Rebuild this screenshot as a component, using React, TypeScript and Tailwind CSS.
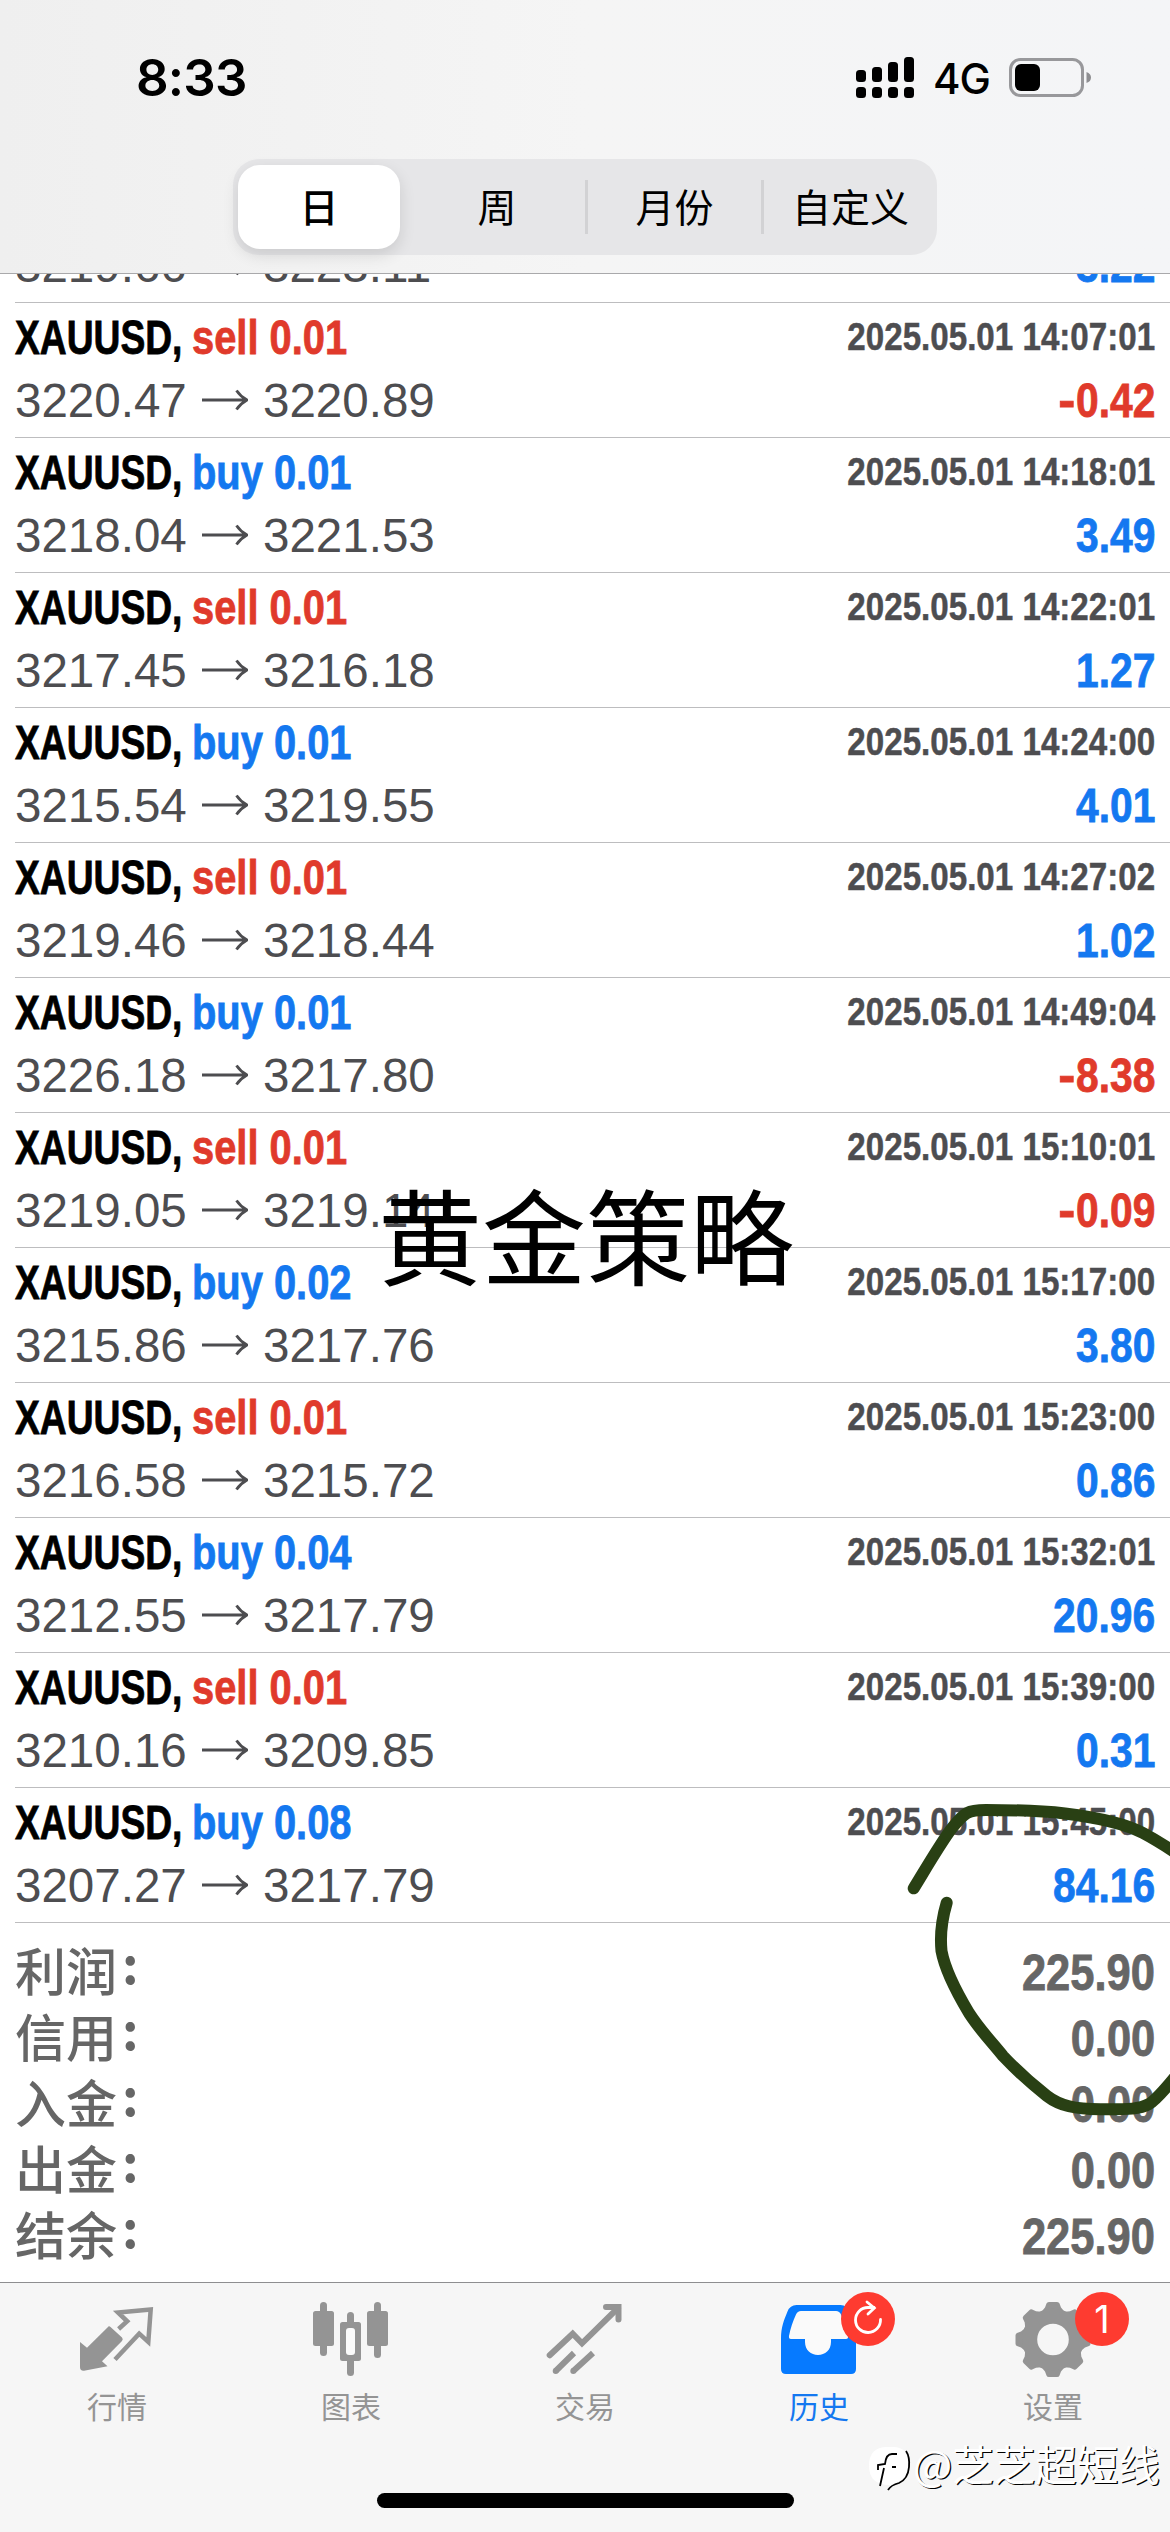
import React from "react";

type Trade = {
  order?: { side: "buy" | "sell"; lots: string; time: string };
  open: string;
  close: string;
  profit: string;
};

const trades: Trade[] = [
  { open: "3219.66", close: "3223.11", profit: "3.22" },
  { order: { side: "sell", lots: "0.01", time: "2025.05.01 14:07:01" }, open: "3220.47", close: "3220.89", profit: "-0.42" },
  { order: { side: "buy", lots: "0.01", time: "2025.05.01 14:18:01" }, open: "3218.04", close: "3221.53", profit: "3.49" },
  { order: { side: "sell", lots: "0.01", time: "2025.05.01 14:22:01" }, open: "3217.45", close: "3216.18", profit: "1.27" },
  { order: { side: "buy", lots: "0.01", time: "2025.05.01 14:24:00" }, open: "3215.54", close: "3219.55", profit: "4.01" },
  { order: { side: "sell", lots: "0.01", time: "2025.05.01 14:27:02" }, open: "3219.46", close: "3218.44", profit: "1.02" },
  { order: { side: "buy", lots: "0.01", time: "2025.05.01 14:49:04" }, open: "3226.18", close: "3217.80", profit: "-8.38" },
  { order: { side: "sell", lots: "0.01", time: "2025.05.01 15:10:01" }, open: "3219.05", close: "3219.14", profit: "-0.09" },
  { order: { side: "buy", lots: "0.02", time: "2025.05.01 15:17:00" }, open: "3215.86", close: "3217.76", profit: "3.80" },
  { order: { side: "sell", lots: "0.01", time: "2025.05.01 15:23:00" }, open: "3216.58", close: "3215.72", profit: "0.86" },
  { order: { side: "buy", lots: "0.04", time: "2025.05.01 15:32:01" }, open: "3212.55", close: "3217.79", profit: "20.96" },
  { order: { side: "sell", lots: "0.01", time: "2025.05.01 15:39:00" }, open: "3210.16", close: "3209.85", profit: "0.31" },
  { order: { side: "buy", lots: "0.08", time: "2025.05.01 15:45:00" }, open: "3207.27", close: "3217.79", profit: "84.16" },
];

const summary = [
  { label: "利润", value: "225.90" },
  { label: "信用", value: "0.00" },
  { label: "入金", value: "0.00" },
  { label: "出金", value: "0.00" },
  { label: "结余", value: "225.90" },
];

function StatusBar() {
  return (
    <div className="flex h-[159px] items-start justify-between pr-[77px] pl-[136px]">
      <div className="mt-[53px] font-['Inter'] text-[51px] leading-[50px] font-semibold tracking-[-0.8px] text-black">8:33</div>
      <div className="mt-[54px] flex items-start">
        <svg className="mt-[3px] h-[42px] w-[60px]" viewBox="0 0 60 42">
          <rect x="0" y="13" width="10" height="12" rx="3.5" />
          <rect x="16" y="10" width="10" height="15" rx="3.5" />
          <rect x="32" y="5" width="10" height="20" rx="3.5" />
          <rect x="48" y="0" width="10" height="25" rx="3.5" />
          <rect x="0" y="30" width="10" height="11" rx="3.5" />
          <rect x="16" y="30" width="10" height="11" rx="3.5" />
          <rect x="32" y="30" width="10" height="11" rx="3.5" />
          <rect x="48" y="30" width="10" height="11" rx="3.5" />
        </svg>
        <div className="mt-[4px] ml-[17px] w-[58px] font-['Inter'] text-[42px] leading-[42px] font-medium tracking-[-1px] text-black">4G</div>
        <svg className="mt-[4px] ml-[18px] h-[40px] w-[84px]" viewBox="0 0 84 40">
          <rect x="1.5" y="1.5" width="72" height="36" rx="10" fill="none" stroke="#98989b" strokeWidth="3" />
          <rect x="6" y="6" width="25" height="27" rx="6" />
          <path d="M77.500 14 q4.500 1.500 4.500 5.500 t-4.500 5.500Z" fill="#8e8e91" />
        </svg>
      </div>
    </div>
  );
}

function Segments() {
  return (
    <div className="mx-auto flex h-[96px] w-[704px] items-center rounded-[26px] bg-[#e6e6e8] px-[5px] font-['Noto_Sans_CJK_SC',sans-serif] text-[39px] leading-none text-black">
      <div className="flex h-[84px] w-[162px] items-center justify-center rounded-[22px] bg-white pb-[3px] font-medium shadow-[0_6px_16px_rgba(0,0,0,0.12)]">日</div>
      <div className="ml-[9px] flex h-[54px] w-[176px] items-center justify-center pb-[3px]">周</div>
      <div className="flex h-[54px] w-[179px] items-center justify-center border-x-[3px] border-[#d2d2d4] pb-[3px]">月份</div>
      <div className="flex h-[54px] flex-1 items-center justify-center pb-[3px] pl-[5px]">自定义</div>
    </div>
  );
}

function TradeRow({ t }: { t: Trade }) {
  const tone = t.order?.side === "sell" ? "text-[#e03a2b]" : "text-[#1478f0]";
  const negative = t.profit.startsWith("-");
  return (
    <div className="ml-[15px] flex h-[135px] shrink-0 justify-between border-b border-[#bdbdbf] pt-[11px] pr-[15px]">
      <div className="flex flex-col gap-[15px] whitespace-nowrap">
        <div className="flex h-[48px] text-[48px] leading-none font-bold [-webkit-text-stroke:0.8px_currentColor]">
          {t.order && (
            <>
              <div className="w-[177px]">
                <div className="w-max origin-left scale-x-[0.775] text-black">XAUUSD,</div>
              </div>
              <div className={tone}>
                <div className="w-max origin-left scale-x-[0.83]">
                  {t.order.side} {t.order.lots}
                </div>
              </div>
            </>
          )}
        </div>
        <div className="flex text-[48px] leading-none text-[#4d4d50]">
          <div className="w-[187px]">
            <div className="w-max origin-left scale-x-[0.99]">{t.open}</div>
          </div>
          <svg className="mt-[11px] h-[24px] w-[46px]" viewBox="0 0 46 24" fill="none" stroke="currentColor" strokeWidth="2.800">
            <path d="M0 12H44M34.500 2.500Q38.500 8.500 45 12Q38.500 15.500 34.500 21.500" />
          </svg>
          <div className="ml-[14.500px] w-max origin-left scale-x-[0.99]">{t.close}</div>
        </div>
      </div>
      <div className="flex flex-col items-end font-bold whitespace-nowrap">
        <div className="mt-[3px] mb-[21px] h-[39px] origin-right scale-x-[0.85] text-[39px] leading-none text-[#4d4d50] [-webkit-text-stroke:0.5px_currentColor]">{t.order?.time}</div>
        <div className={negative ? "text-[#e03a2b]" : "text-[#1478f0]"}>
          <div className="origin-right scale-x-[0.85] text-[48px] leading-none [-webkit-text-stroke:0.8px_currentColor]">
            {negative && <span className="mr-[1px] inline-block origin-right scale-x-[1.250]">-</span>}
            {t.profit.replace("-", "")}
          </div>
        </div>
      </div>
    </div>
  );
}

function Summary() {
  return (
    <div className="flex flex-1 flex-col pt-[16px] pr-[15px] pl-[15px] text-[#666666]">
      {summary.map((s) => (
        <div key={s.label} className="flex h-[66px] items-center justify-between">
          <div className="flex pb-[6px] font-['Noto_Sans_CJK_SC',sans-serif] text-[51px] leading-none font-medium">
            {s.label}
            <span className="ml-[5px] -translate-y-[7px] font-bold">:</span>
          </div>
          <div className="origin-right scale-x-[0.87] pt-[1px] text-[50px] leading-none font-bold [-webkit-text-stroke:0.8px_currentColor]">{s.value}</div>
        </div>
      ))}
    </div>
  );
}

function QuotesIcon() {
  return (
    <svg className="h-[88px] w-[100px]" viewBox="67 2296 100 88">
      <path d="M80 2342L87 2347.700L107.500 2327.500Q109 2325.500 110.500 2327L122 2337.500Q123.500 2339.300 122 2341L102 2361.300L107.500 2366.300L84 2370.700Q80 2371 80 2367Z" fill="#949494" />
      <path d="M118.600 2329L127.200 2321.300L118 2312.500L150.700 2309.500L148.300 2342L139.200 2333.700L115 2359.500" fill="none" stroke="#949494" strokeWidth="4.500" />
    </svg>
  );
}

function ChartIcon() {
  return (
    <svg className="h-[88px] w-[100px]" viewBox="301 2296 100 88" fill="#949494">
      <rect x="320" y="2302" width="7" height="54" rx="3.500" />
      <rect x="313" y="2311" width="21" height="35" rx="2.500" />
      <rect x="347" y="2312" width="7" height="64" rx="3.500" />
      <rect x="340" y="2322" width="21" height="39" rx="2.500" />
      <rect x="346" y="2328" width="9" height="27" rx="3" fill="#fafafa" />
      <rect x="374" y="2302" width="7" height="56" rx="3.500" />
      <rect x="367" y="2311" width="21" height="35" rx="2.500" />
    </svg>
  );
}

function TradeIcon() {
  return (
    <svg className="h-[88px] w-[100px]" viewBox="535 2296 100 88" fill="none" stroke="#949494" strokeWidth="6">
      <path d="M549.700 2355.300L572.700 2333.700L582 2343.300L618 2308" strokeLinecap="round" />
      <path d="M606 2307H618.500V2319.500" strokeLinecap="round" />
      <path d="M555.700 2371L574 2353M573.300 2371L593 2353" />
      <path d="M555.700 2371h0.010M573.300 2371h0.010" strokeLinecap="round" />
    </svg>
  );
}

function HistoryIcon() {
  return (
    <svg className="h-[88px] w-[100px]" viewBox="769 2296 100 88">
      <path d="M781 2369V2339C781 2327 784 2320 787.500 2311.500Q790 2305 796.500 2305H840.500Q847 2305 849.500 2311.500C853 2320 856 2327 856 2339V2369Q856 2374 851 2374H786Q781 2374 781 2369Z" fill="#067aff" />
      <path d="M791 2339Q788.500 2339 789 2336C790.500 2328 793 2321 796 2314.500Q797.500 2311 801 2311H836Q839.500 2311 841 2314.500C844 2321 846.500 2328 848 2336Q848.500 2339 846 2339H831V2342C831 2350 825 2355 818 2355S805 2350 805 2342V2339Z" fill="#fafafa" />
    </svg>
  );
}

function SettingsIcon() {
  return (
    <svg className="h-[88px] w-[100px]" viewBox="-50 -43.500 100 88">
      <g fill="#949494">
        {[0, 45, 90, 135, 180, 225, 270, 315].map((a) => (
          <path key={a} d="M-13 -26L-8 -32L-6.500 -36Q-6 -37.500 -4 -37.500H4Q6 -37.500 6.500 -36L8 -32L13 -26Z" transform={`rotate(${a})`} />
        ))}
      </g>
      <circle r="23.300" fill="none" stroke="#949494" strokeWidth="15" />
    </svg>
  );
}

function TabBar() {
  const tabs = [
    { label: "行情", icon: <QuotesIcon /> },
    { label: "图表", icon: <ChartIcon /> },
    { label: "交易", icon: <TradeIcon /> },
    { label: "历史", icon: <HistoryIcon />, active: true, badge: "sync" },
    { label: "设置", icon: <SettingsIcon />, badge: "1" },
  ];
  return (
    <nav className="grid h-[139px] grid-cols-5">
      {tabs.map((tab) => (
        <div key={tab.label} className="relative flex flex-col items-center pt-[13px]">
          {tab.icon}
          {tab.badge && (
            <div className="absolute top-[9px] left-[139px] flex size-[54px] items-center justify-center rounded-full bg-[#fe3b30] font-['Inter'] text-[38px] leading-none text-white">
              {tab.badge === "sync" ? (
                <svg className="size-[54px]" viewBox="841 2292 54 54" fill="none" stroke="white" strokeWidth="2.800" strokeLinecap="round">
                  <path d="M880.500 2319.500A12.500 12.500 0 1 1 868 2307.500H874" />
                  <path d="M867 2302L874.300 2308L868 2314" />
                </svg>
              ) : (
                tab.badge
              )}
            </div>
          )}
          <div className={`mt-[6px] font-['Noto_Sans_CJK_SC',sans-serif] text-[30px] leading-none ${tab.active ? "text-[#1478f0]" : "text-[#949494]"}`}>{tab.label}</div>
        </div>
      ))}
    </nav>
  );
}

function Watermark() {
  return (
    <div className="absolute top-[2439px] left-[867px] flex items-start">
      <svg className="h-[56px] w-[46px]" viewBox="0 0 46 56">
        <path d="M20 8h6q16 0 16 18q0 14-12 18l-9 8l2-6q-21 0-21-19T20 8Z" fill="white" />
        <path d="M39 12q4 6 3 16q-1 12-10 16q-8 2-11 7" fill="none" stroke="black" strokeWidth="1.800" />
        <path d="M13 47L17 29M11 31v-5l7-1q1-10 7-10h5M25 28h4" fill="none" stroke="black" strokeWidth="1.800" />
      </svg>
      <div className="-mt-[4px] font-['Noto_Sans_CJK_SC',sans-serif] text-[41.500px] leading-[56px] whitespace-nowrap text-white [text-shadow:1.200px_1.200px_0_#000]">@芝芝超短线</div>
    </div>
  );
}

function Scribble() {
  return (
    <svg className="pointer-events-none absolute top-[1790px] left-[890px] h-[340px] w-[280px]" viewBox="890 1790 280 340" fill="none" stroke="#294014" strokeWidth="12" strokeLinecap="round" strokeLinejoin="round">
      <path d="M913.700 1888.300C925 1870 940 1844 952 1828C965 1812 968 1810 986 1810C1010 1810 1040 1810.500 1065 1813.500C1085 1816 1122 1822 1143 1833Q1158 1841 1176 1853" />
      <path d="M946.700 1902.700C941 1922 940 1936 941.500 1951C945 1970 957 1993 969 2013C980 2030 990 2040 1003 2056C1020 2074 1033 2085 1047 2096C1060 2106 1075 2109 1100 2109.300C1130 2109.500 1140 2109 1149 2104Q1157 2099 1175 2077" />
    </svg>
  );
}

export default function App() {
  return (
    <div className="relative flex h-[2532px] w-[1170px] flex-col overflow-hidden bg-white font-['Liberation_Sans',Arial,sans-serif]">
      <header className="h-[274px] shrink-0 border-b border-[#a9a9ab] bg-linear-to-r from-[#efefef] via-[#f5f5f5] to-[#f4f5f7]">
        <StatusBar />
        <Segments />
      </header>
      <main className="flex h-[1649px] shrink-0 flex-col justify-end overflow-hidden">
        {trades.map((t, i) => (
          <TradeRow key={i} t={t} />
        ))}
      </main>
      <Summary />
      <footer className="h-[250px] shrink-0 border-t border-[#8e8e90] bg-[#f6f6f6]">
        <TabBar />
        <div className="mx-auto mt-[71px] h-[15px] w-[417px] rounded-full bg-black" />
      </footer>
      <div className="absolute top-[1178px] left-[378px] font-['Noto_Sans_CJK_SC',sans-serif] text-[104px] leading-[110px] whitespace-nowrap text-black">黄金策略</div>
      <Scribble />
      <Watermark />
    </div>
  );
}
